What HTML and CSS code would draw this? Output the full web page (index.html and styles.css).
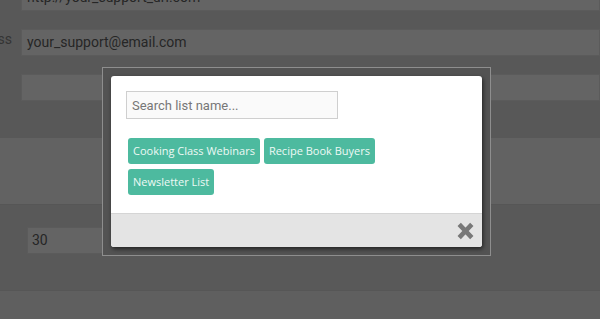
FILE: index.html
```html
<!DOCTYPE html>
<html lang="en">
<head>
<meta charset="utf-8">
<title>Select list</title>
<link rel="stylesheet" href="styles.css">
</head>
<body>
<div class="page">
  <section class="sec sec-form">
    <div class="row">
      <label class="lbl">Support URL</label>
      <div class="field">http://your_support_url.com</div>
    </div>
    <div class="row">
      <label class="lbl">Email Address</label>
      <div class="field">your_support@email.com</div>
    </div>
    <div class="row">
      <label class="lbl"></label>
      <div class="field"></div>
    </div>
  </section>
  <section class="sec sec-light"></section>
  <section class="sec sec-num">
    <div class="field field-small">30</div>
  </section>
  <section class="sec sec-foot"></section>
</div>

<div class="modal-frame">
  <div class="dialog">
    <div class="dialog-body">
      <input class="search" type="text" placeholder="Search list name...">
      <div class="tags">
        <span class="tag">Cooking Class Webinars</span>
        <span class="tag">Recipe Book Buyers</span>
        <span class="tag">Newsletter List</span>
      </div>
    </div>
    <div class="dialog-foot">
      <svg class="close" viewBox="0 0 17 18" width="17" height="18" aria-label="Close">
        <path d="M2.2 2.4 L14.8 15.6 M14.8 2.4 L2.2 15.6" stroke="#787878" stroke-width="4.6" fill="none" stroke-linecap="butt"/>
      </svg>
    </div>
  </div>
</div>
</body>
</html>
```

FILE: styles.css
```css
html, body {
  margin: 0;
  padding: 0;
}
body {
  width: 600px;
  height: 319px;
  overflow: hidden;
  background: #5f5f5f;
  font-family: Roboto, "Liberation Sans", sans-serif;
  position: relative;
}
.page {
  display: flex;
  flex-direction: column;
}
.sec-form {
  background: #585858;
  margin-top: -16px;
  padding-bottom: 37px;
  display: flex;
  flex-direction: column;
  gap: 18px;
}
.row {
  display: grid;
  grid-template-columns: 12px 1fr;
  column-gap: 9px;
  align-items: start;
}
.lbl {
  direction: rtl;
  white-space: nowrap;
  overflow: hidden;
  text-align: right;
  font-size: 14px;
  line-height: 20px;
  color: #343434;
}
.field {
  box-sizing: border-box;
  height: 27px;
  background: #646464;
  border: 1px solid #5b5b5b;
  padding-left: 5px;
  font-size: 14px;
  line-height: 25px;
  color: #262626;
  white-space: nowrap;
  overflow: hidden;
}
.sec-light {
  background: #626262;
  height: 66px;
  border-bottom: 1px solid #565656;
}
.sec-num {
  background: #595959;
  height: 86px;
  padding: 22px 0 0 27px;
  box-sizing: border-box;
  border-bottom: 1px solid #565656;
}
.field-small {
  width: 300px;
  padding-left: 4px;
}
.sec-foot {
  background: #5f5f5f;
  height: 40px;
}

.modal-frame {
  position: absolute;
  left: 102px;
  top: 67px;
  width: 389px;
  height: 189px;
  box-sizing: border-box;
  border: 1px solid #8e8e8e;
  padding: 8px;
  background: #535353;
}
.dialog {
  background: #fff;
  border-radius: 3px;
  height: 171px;
  display: flex;
  flex-direction: column;
  overflow: hidden;
  box-shadow: 1px 2px 4px rgba(0, 0, 0, 0.6);
}
.dialog-body {
  padding: 15px 15px 18px;
  flex: 1;
}
.search {
  display: block;
  box-sizing: border-box;
  width: 212px;
  height: 28px;
  margin: 0;
  border: 1px solid #cfcfcf;
  background: #fafafa;
  padding: 0 5px;
  font-family: Roboto, "Liberation Sans", sans-serif;
  font-size: 13px;
  color: #333;
  outline: none;
}
.search::placeholder {
  color: #777;
}
.tags {
  margin: 19px 0 0 2px;
  display: flex;
  flex-wrap: wrap;
  gap: 5px 4px;
  width: 260px;
}
.tag {
  background: #4dba9f;
  color: #eef9f5;
  border-radius: 3px;
  font-family: "Open Sans", sans-serif;
  font-size: 11px;
  line-height: 16px;
  padding: 5px 5px;
  white-space: nowrap;
}
.dialog-foot {
  height: 34px;
  box-sizing: border-box;
  border-top: 1px solid #d5d5d5;
  background: #e4e4e4;
  display: flex;
  justify-content: flex-end;
  align-items: center;
  padding-right: 8px;
}
.close {
  display: block;
}
```
